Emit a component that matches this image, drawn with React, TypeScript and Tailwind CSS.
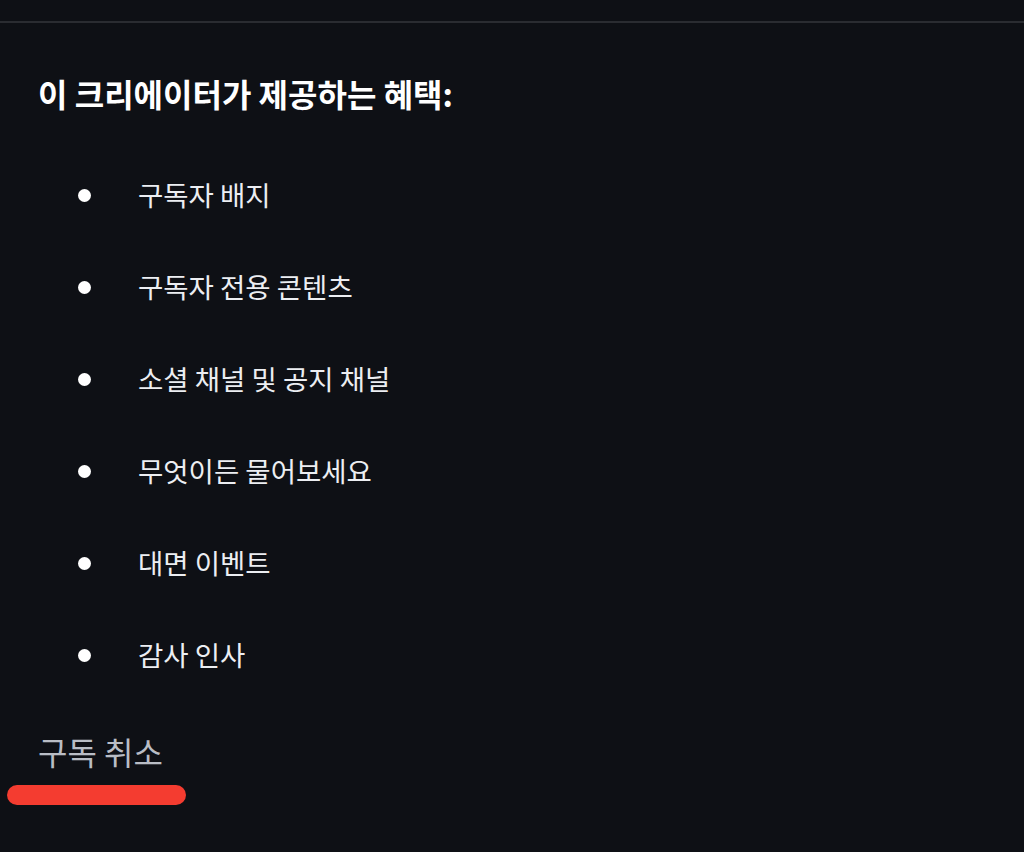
const PERKS = [
  '구독자 배지',
  '구독자 전용 콘텐츠',
  '소셜 채널 및 공지 채널',
  '무엇이든 물어보세요',
  '대면 이벤트',
  '감사 인사',
]

export default function App() {
  return (
    <div
      className="w-[1024px] h-[852px] bg-[#0e1015] text-white overflow-hidden"
      style={{ fontFamily: '"Noto Sans CJK KR", "Noto Sans", sans-serif' }}
    >
      <div className="pt-[21px]">
        <div className="h-[2px] bg-[#2a2c31]" />
      </div>

      {/* Benefits */}
      <section className="px-[38px] pt-[48px]">
        <h2 className="text-[32px] font-bold leading-[44px]">이 크리에이터가 제공하는 혜택:</h2>
        <ul className="mt-[34px] flex flex-col">
          {PERKS.map(p => (
            <li key={p} className="flex items-center h-[92px] pl-[40px]">
              <span className="w-[13px] h-[13px] rounded-full bg-white shrink-0" />
              <span className="ml-[47px] text-[27.5px] leading-none text-[#eceef2]">{p}</span>
            </li>
          ))}
        </ul>
      </section>

      {/* Cancel */}
      <div className="px-[38px] mt-[30px]">
        <p className="text-[32px] leading-[40px] text-[#b9bdc5]">구독 취소</p>
      </div>
      <div className="ml-[7px] mt-[14px] w-[179px] h-[20px] rounded-full bg-[#f43c30]" />
    </div>
  )
}
